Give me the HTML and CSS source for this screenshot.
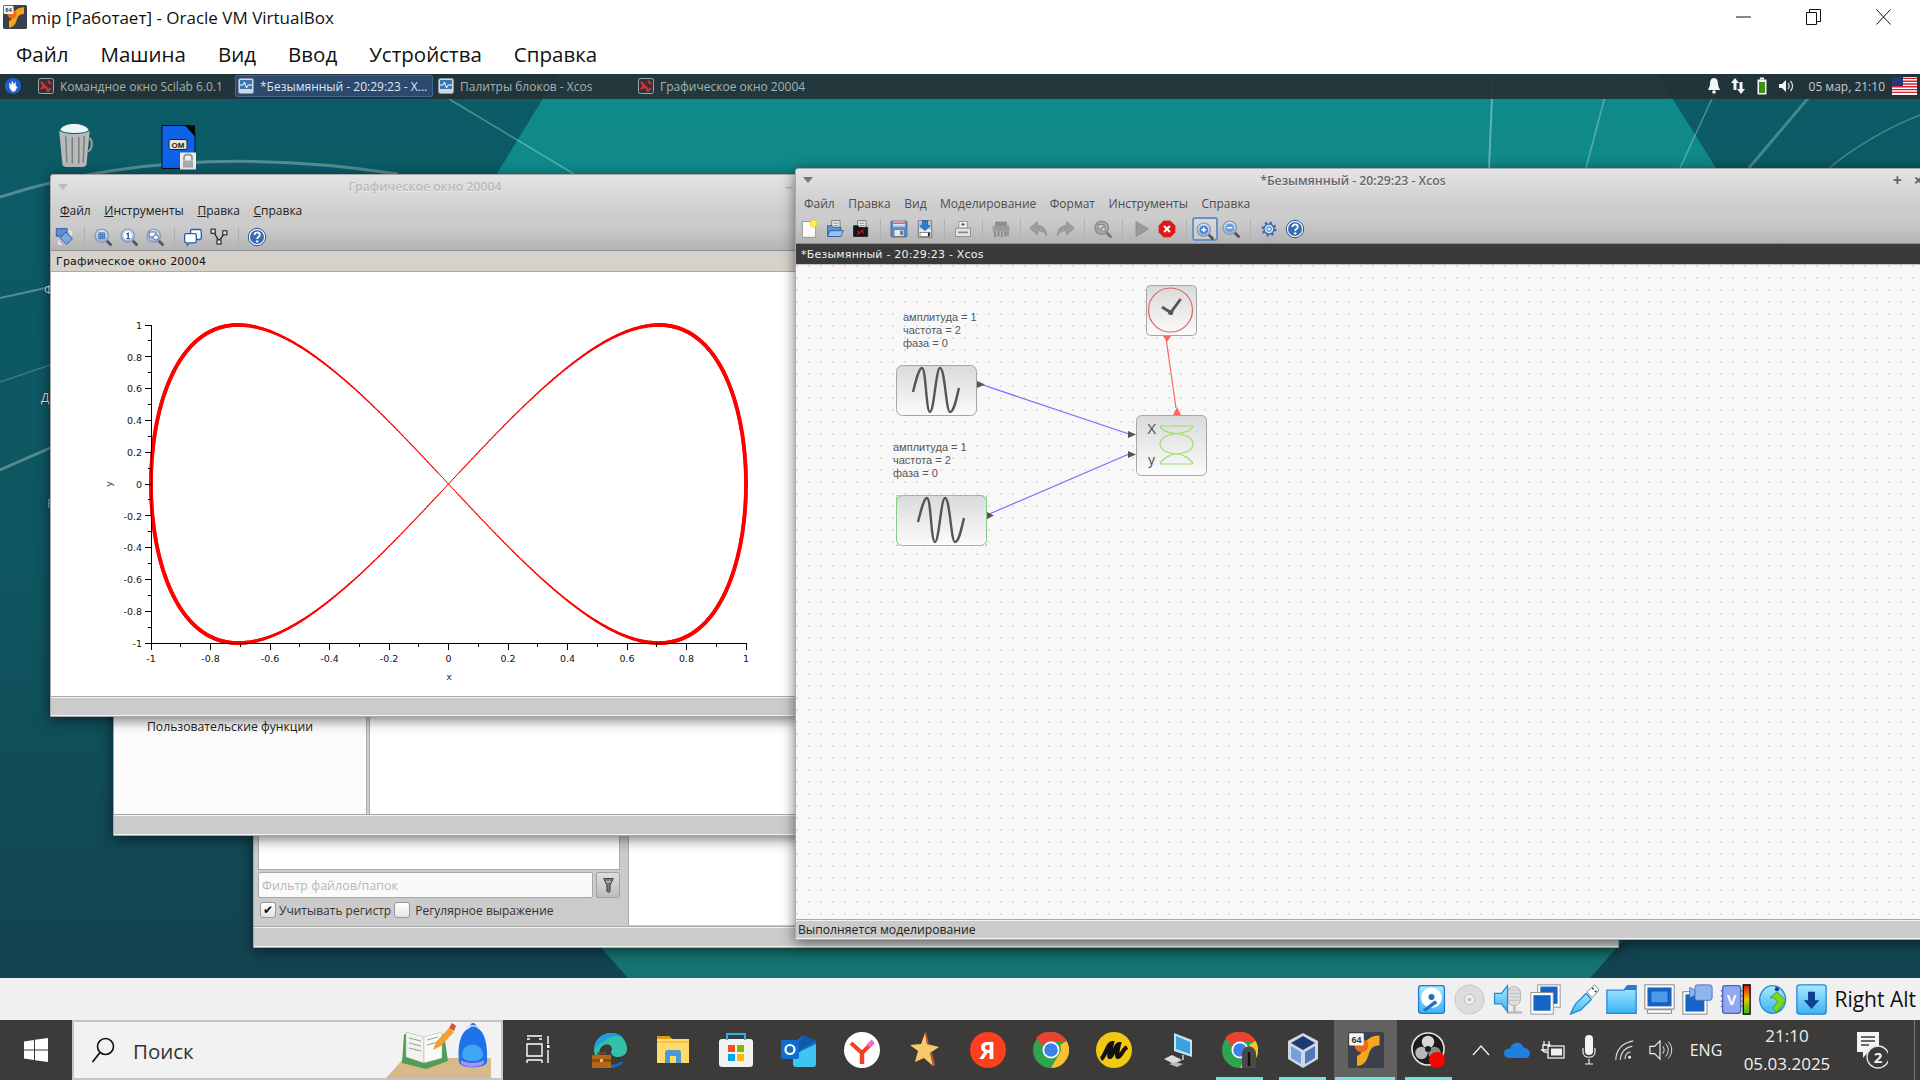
FILE: index.html
```html
<!DOCTYPE html>
<html lang="ru">
<head>
<meta charset="utf-8">
<title>mip [Работает] - Oracle VM VirtualBox</title>
<link rel="stylesheet" href="styles.css">
</head>
<body>
<svg class="sprite" width="0" height="0" aria-hidden="true">
  <defs>
    <linearGradient id="g-block" x1="0" y1="0" x2="0" y2="1"><stop offset="0" stop-color="#dadada"/><stop offset="1" stop-color="#fbfbfb"/></linearGradient>
    <linearGradient id="g-sky" x1="0" y1="0" x2="0" y2="1"><stop offset="0" stop-color="#a9e9ff"/><stop offset="1" stop-color="#3bb4f2"/></linearGradient>
    <linearGradient id="g-meter" x1="0" y1="0" x2="0" y2="1"><stop offset="0" stop-color="#e01010"/><stop offset=".5" stop-color="#f0c000"/><stop offset="1" stop-color="#20c020"/></linearGradient>
    <linearGradient id="g-lens" x1="0" y1="0" x2="0" y2="1"><stop offset="0" stop-color="#dfe9f5"/><stop offset="1" stop-color="#8fb0d6"/></linearGradient>
    <symbol id="i-lens" viewBox="0 0 24 24"><path d="M15 15l6 6" stroke="#555" stroke-width="3.4" stroke-linecap="round"/><circle cx="10.5" cy="10.5" r="8" fill="url(#g-lens)" stroke="#8a9db5" stroke-width="1.6"/></symbol>
    <symbol id="i-grid" viewBox="0 0 24 24"><use href="#i-lens"/><path d="M7 7h7v7H7zM7 9.3h7M7 11.7h7M9.3 7v7M11.7 7v7" fill="none" stroke="#2f5ea8" stroke-width=".9"/></symbol>
    <symbol id="i-one" viewBox="0 0 24 24"><use href="#i-lens"/><circle cx="10.5" cy="10.5" r="5" fill="#fff"/><path d="M9 8.6l2-1.2v6.4M9 14h4" fill="none" stroke="#23518f" stroke-width="1.5"/></symbol>
    <symbol id="i-wins" viewBox="0 0 24 24"><use href="#i-lens"/><rect x="5" y="6" width="8" height="6" fill="#f2f6fb" stroke="#2f5ea8"/><circle cx="13" cy="12.5" r="3" fill="#fff" stroke="#2f5ea8"/></symbol>
    <symbol id="i-plus" viewBox="0 0 24 24"><use href="#i-lens"/><circle cx="10.5" cy="10.5" r="5.2" fill="#3f7fd0"/><path d="M10.5 7.4v6.2M7.4 10.5h6.2" stroke="#fff" stroke-width="2"/></symbol>
    <symbol id="i-minus" viewBox="0 0 24 24"><use href="#i-lens"/><circle cx="10.5" cy="10.5" r="5.2" fill="#6f9ad0"/><path d="M7.4 10.5h6.2" stroke="#fff" stroke-width="2"/></symbol>
    <symbol id="i-gzoom" viewBox="0 0 24 24"><path d="M15 15l6 6" stroke="#777" stroke-width="3.4" stroke-linecap="round"/><circle cx="10.5" cy="10.5" r="8" fill="#a9a9a9" stroke="#8c8c8c" stroke-width="1.6"/><rect x="6" y="6.5" width="7" height="5.5" fill="#c8c8c8" stroke="#808080"/><circle cx="12.5" cy="12.5" r="2.6" fill="#c8c8c8" stroke="#808080"/></symbol>
    <symbol id="i-help" viewBox="0 0 24 24"><circle cx="12" cy="12" r="10.4" fill="#fff" stroke="#24508f" stroke-width="1.2"/><circle cx="12" cy="12" r="8.4" fill="#3b6db0"/><path d="M9 9.5c0-4 6.4-4 6.4-.2 0 2.6-3.2 2.4-3.2 5" fill="none" stroke="#fff" stroke-width="2.1"/><circle cx="12.2" cy="17.2" r="1.4" fill="#fff"/></symbol>
    <symbol id="i-fig" viewBox="0 0 24 24"><rect x="1.5" y="2" width="13" height="9" fill="#5d8fd0" stroke="#24508f"/><path d="M6 13l7-7 8 8-7 7z" fill="#7fa8dc" stroke="#24508f"/><path d="M16 5l4 1-1 4M8 21l-4-1 1-4" fill="none" stroke="#eef" stroke-width="1.6"/></symbol>
    <symbol id="i-copy" viewBox="0 0 24 24"><rect x="9" y="3" width="13" height="12" rx="2" fill="#f5f8fc" stroke="#2f5ea8" stroke-width="1.6"/><rect x="2" y="8" width="14" height="11" rx="2" fill="#fff" stroke="#2f5ea8" stroke-width="1.6"/><path d="M5 19v3l3-3" fill="#fff" stroke="#2f5ea8" stroke-width="1.4"/></symbol>
    <symbol id="i-tree" viewBox="0 0 24 24"><path d="M5 5l7 12 7-10" fill="none" stroke="#222" stroke-width="1.4"/><rect x="2.5" y="2.5" width="5" height="5" fill="#ddd" stroke="#222" stroke-width="1.3"/><rect x="16.500" y="4.500" width="5" height="5" fill="#ddd" stroke="#222" stroke-width="1.3"/><rect x="9.500" y="15.500" width="5" height="5" fill="#ddd" stroke="#222" stroke-width="1.3"/></symbol>
    <symbol id="i-new" viewBox="0 0 24 24"><path d="M4 3h12l4 4v15H4z" fill="#fbfbfb" stroke="#8a8a8a"/><circle cx="17.500" cy="5.500" r="4.400" fill="#ffee55" stroke="#e0c020" stroke-width=".6"/></symbol>
    <symbol id="i-open" viewBox="0 0 24 24"><path d="M8 2h10v9H8z" fill="#eee" stroke="#666"/><path d="M10 5h6M10 8h6" stroke="#777"/><path d="M3 8h5l2 2h9v11H3z" fill="#5b95d8" stroke="#2a5a9f"/><path d="M3 21l3-7h16l-3 7z" fill="#9cc1ea" stroke="#2a5a9f"/></symbol>
    <symbol id="i-recent" viewBox="0 0 24 24"><path d="M8 2h10v9H8z" fill="#eee" stroke="#666"/><path d="M10 5h6M10 8h6" stroke="#777"/><path d="M3 8h5l2 2h10v11H3z" fill="#14141c" stroke="#222"/><path d="M8 14l2 3 3-3 2 3M7 18h2M14 13h2" stroke="#e01010" stroke-width="1.5" fill="none"/></symbol>
    <symbol id="i-save" viewBox="0 0 24 24"><rect x="2.500" y="2.500" width="19" height="19" rx="1" fill="#5b95d8" stroke="#2a5a9f"/><rect x="5" y="3" width="14" height="6" fill="#f0f0f0"/><path d="M5 5h14" stroke="#e03030" stroke-width="1.600"/><path d="M5 7.500h14" stroke="#bbb"/><rect x="6" y="12.500" width="12" height="8.500" fill="#e8e8e8" stroke="#555" stroke-width=".7"/><rect x="13.500" y="14" width="3" height="5" fill="#666"/></symbol>
    <symbol id="i-saveas" viewBox="0 0 24 24"><path d="M4 2h16v20H4z" fill="#eaeaea" stroke="#666"/><path d="M5 3h14v9H5z" fill="#9cc1ea"/><path d="M9 2h6v6h3l-6 6-6-6h3z" fill="#2f7fd0" stroke="#1c4d8f" stroke-width=".8"/><rect x="6" y="16" width="12" height="5" fill="#fff" stroke="#444" stroke-width=".7"/><rect x="15.500" y="16.500" width="2" height="4" fill="#111"/></symbol>
    <symbol id="i-print" viewBox="0 0 24 24"><path d="M7 3h10v8H7z" fill="#f6f6f6" stroke="#888"/><path d="M9.500 6.500l2.500-2 2.500 2-2.500 2z" fill="#666"/><path d="M3 11h18v10H3z" fill="#e4e4e4" stroke="#888"/><path d="M6 15h12v2H6z" fill="#888"/></symbol>
    <symbol id="i-gprint" viewBox="0 0 24 24"><path d="M5 3h14v7H5z" fill="#8d8d8d"/><path d="M2 8h20v7H2z" fill="#9b9b9b"/><path d="M5 15v7M9 15v6M13 15v7M17 15v6M20 15v5" stroke="#8a8a8a" stroke-width="2.400"/></symbol>
    <symbol id="i-undo" viewBox="0 0 24 24"><path d="M10 3v5c6 0 11 3 11 12-3-5-6-6-11-6v5L1 11z" fill="#9e9e9e" stroke="#8c8c8c"/></symbol>
    <symbol id="i-redo" viewBox="0 0 24 24"><path d="M14 3v5C8 8 3 11 3 20c3-5 6-6 11-6v5l9-8z" fill="#9e9e9e" stroke="#8c8c8c"/></symbol>
    <symbol id="i-play" viewBox="0 0 24 24"><path d="M6 3l15 9-15 9z" fill="#9b9b9b" stroke="#8a8a8a"/></symbol>
    <symbol id="i-stop" viewBox="0 0 24 24"><path d="M8 1.500h8L22.500 8v8L16 22.500H8L1.500 16V8z" fill="#e01818" stroke="#b4b4b4"/><path d="M8.500 8.500l7 7M15.500 8.500l-7 7" stroke="#fff" stroke-width="2.600"/></symbol>
    <symbol id="i-gear" viewBox="0 0 24 24"><circle cx="12" cy="12" r="6" fill="#dbe8f8" stroke="#3b6db0" stroke-width="1.800"/><circle cx="12" cy="12" r="7.500" fill="none" stroke="#3b6db0" stroke-width="3" stroke-dasharray="2.600 3.290"/><circle cx="12" cy="12" r="2.800" fill="#dbe8f8" stroke="#3b6db0" stroke-width="1.200"/></symbol>
    <symbol id="i-scilab" viewBox="0 0 16 16"><rect x=".5" y=".5" width="15" height="15" rx="2" fill="#30343a" stroke="#9aa"/><path d="M3 4l3 3-2 3 4-1 2 4 3-3M10 3l3 3" fill="none" stroke="#d83030" stroke-width="2"/></symbol>
    <symbol id="i-xcos" viewBox="0 0 16 16"><rect x=".5" y=".5" width="15" height="15" rx="2" fill="#cfd8e0" stroke="#8a9aa8"/><rect x="2" y="2" width="12" height="9" fill="#3f75ae"/><path d="M2 7h3l1.500-3 2 6 1.500-3h4" fill="none" stroke="#fff"/></symbol>
    <symbol id="i-vb64" viewBox="0 0 32 32"><rect width="32" height="32" rx="2" fill="#3b404b"/><path d="M8 30c5 0 8-3 10-9 1.500-5 3-9 10-9V3c-9 0-13 5-15 11-1 4-2 7-5 7z" fill="#f7a51e"/><circle cx="12" cy="12" r="6" fill="#ef6a14"/><rect x="1" y="1" width="13" height="11" rx="1" fill="#f4f4f4"/><text x="7.500" y="9.500" class="badge-text">64</text></symbol>
  </defs>
</svg>

<header class="host-title">
  <svg class="host-icon"><use href="#i-vb64"/></svg>
  <span class="host-title-text">mip [Работает] - Oracle VM VirtualBox</span>
  <div class="win-controls">
    <svg class="ctl" viewBox="0 0 15 16"><path d="M0 8h15" stroke="#111" fill="none"/></svg>
    <svg class="ctl" viewBox="0 0 15 16"><path d="M.5 3.500h10v12H.5zM3.500 3.500v-3h11v12h-4" stroke="#111" fill="none"/></svg>
    <svg class="ctl" viewBox="0 0 15 16"><path d="M.5.500l14 15M14.500.500l-14 15" stroke="#111" fill="none"/></svg>
  </div>
</header>
<nav class="host-menu">
  <span>Файл</span><span>Машина</span><span>Вид</span><span>Ввод</span><span>Устройства</span><span>Справка</span>
</nav>

<main class="guest">
  <svg class="wallpaper" viewBox="0 74 1920 904" preserveAspectRatio="none">
    <defs>
      <linearGradient id="g-wall" x1="0" y1="0" x2="0" y2="1"><stop offset="0" stop-color="#0b5c67"/><stop offset=".55" stop-color="#0e5660"/><stop offset="1" stop-color="#134350"/></linearGradient>
      <linearGradient id="g-wall2" x1="0" y1="0" x2="0" y2="1"><stop offset="0" stop-color="#0f8b8c"/><stop offset="1" stop-color="#167470"/></linearGradient>
    </defs>
    <rect x="0" y="74" width="1920" height="904" fill="url(#g-wall)"/>
    <path d="M558 74L259 562 628 978H1590L1962 560 1657 74z" fill="url(#g-wall2)"/>
    <g fill="none" stroke="#fff">
      <path d="M0 197Q178 140 398 174" stroke-opacity=".3" stroke-width="3"/>
      <path d="M449 99L574 174" stroke-opacity=".3" stroke-width="1.500"/>
      <path d="M1493 74L1489 168" stroke-opacity=".35" stroke-width="2"/>
      <path d="M1611 74L1586 168" stroke-opacity=".3" stroke-width="1.500"/>
      <path d="M1716 90L1680 168" stroke-opacity=".3" stroke-width="1.500"/>
      <path d="M1815 90L1749 168" stroke-opacity=".25" stroke-width="3"/>
      <path d="M1920 115Q1870 135 1829 168" stroke-opacity=".25" stroke-width="1.500"/>
      <path d="M0 298L50 287" stroke-opacity=".3" stroke-width="2"/>
      <path d="M0 382L50 365" stroke-opacity=".2" stroke-width="1.500"/>
      <path d="M0 470L50 448" stroke-opacity=".3" stroke-width="3"/>
    </g>
  </svg>

  <div class="panel">
    <svg class="panel-logo" viewBox="0 0 20 20"><circle cx="10" cy="10" r="9" fill="#1c5fd0"/><path d="M6 6l2 3 1-5 2 4 2-3 0 5 2 1-3 5H9L6 12z" fill="#fff"/></svg>
    <div class="task"><svg class="task-icon"><use href="#i-scilab"/></svg><span>Командное окно Scilab 6.0.1</span></div>
    <div class="task task-active"><svg class="task-icon"><use href="#i-xcos"/></svg><span>*Безымянный - 20:29:23 - Х...</span></div>
    <div class="task"><svg class="task-icon"><use href="#i-xcos"/></svg><span>Палитры блоков - Xcos</span></div>
    <div class="task"><svg class="task-icon"><use href="#i-scilab"/></svg><span>Графическое окно 20004</span></div>
    <div class="tray">
      <svg class="tray-icon" viewBox="0 0 16 18"><path d="M8 1c-3 0-4 3-4 6 0 3-2 5-2 6h12c0-1-2-3-2-6 0-3-1-6-4-6z" fill="#f4f4f4"/><circle cx="8" cy="15" r="1.800" fill="#f4f4f4"/></svg>
      <svg class="tray-icon" viewBox="0 0 16 18"><path d="M5 1l4 5H6.500v7h-3V6H1zM11 17l-4-5h2.500V5h3v7H15z" fill="#f4f4f4"/></svg>
      <svg class="tray-icon" viewBox="0 0 16 18"><rect x="3.500" y="2.500" width="9" height="15" fill="#f4f4f4"/><rect x="5" y="5" width="6" height="11" fill="#3f8f10"/><rect x="6" y=".5" width="4" height="2" fill="#f4f4f4"/></svg>
      <svg class="tray-icon" viewBox="0 0 16 18"><path d="M1 7h3l4-4v12l-4-4H1z" fill="#f4f4f4"/><path d="M10 6c1.500 2 1.500 4 0 6M12.500 4c2.500 3 2.500 7 0 10" stroke="#dfe6e6" fill="none" stroke-width="1.200"/></svg>
      <span class="tray-clock">05 мар, 21:10</span>
      <svg class="flag" viewBox="0 0 25 18"><rect width="25" height="18" fill="#fff"/><path d="M0 1.400h25M0 4.200h25M0 7h25M0 9.800h25M0 12.600h25M0 15.400h25" stroke="#d02030" stroke-width="1.400"/><rect width="11" height="9" fill="#26387c"/></svg>
    </div>
  </div>

  <svg class="desk-icon desk-trash" viewBox="2 2 33 40"><path d="M5 8c3-7 22-7 26 0-2 4-23 4-26 0z" fill="#eef4f6"/><path d="M4 9l3 31c1 4 21 4 22 0l3-31c-6 4-22 4-28 0z" fill="#b6babb"/><path d="M10 14l1 24M16 15v24M22 15v24M27 14l-1 24" stroke="#7d8283" stroke-width="1.500"/><path d="M31 16c4 0 4 10-1 12" fill="none" stroke="#999" stroke-width="2"/></svg>
  <svg class="desk-icon desk-doc" viewBox="0 0 36 46"><path d="M1 1h28l5 8v35H1z" fill="#0d62e8" stroke="#0a0f20"/><path d="M24 1h10v11z" fill="#050505"/><rect x="8" y="15" width="18" height="10" rx="2" fill="#e8e4d0" stroke="#222"/><text x="17" y="23" class="om-text">ОМ</text><rect x="19" y="28" width="16" height="17" fill="#eee"/><path d="M23 36v-3c0-4 8-4 8 0v3" fill="none" stroke="#999" stroke-width="1.800"/><rect x="22" y="36" width="10" height="7" fill="#aaa"/></svg>
  <span class="desk-label desk-label-1">Ф</span>
  <span class="desk-label desk-label-2">Д</span>
  <span class="desk-label desk-label-3">Р</span>

  <section class="window win-files">
    <div class="files-body">
      <div class="files-side">
        <div class="files-list"></div>
        <div class="filter-row">
          <div class="filter-input">Фильтр файлов/папок</div>
          <div class="filter-btn"><svg viewBox="0 0 16 22" class="filter-svg"><path d="M2 3h12l-4 8v8l-2 1-2-1v-8z" fill="#777" stroke="#333"/><path d="M5 7h6" stroke="#fff"/></svg></div>
        </div>
        <div class="check-row">
          <span class="check is-checked">✔</span><span class="check-label">Учитывать регистр</span>
          <span class="check"></span><span class="check-label check-label-2">Регулярное выражение</span>
        </div>
      </div>
      <div class="files-pane"></div>
    </div>
    <div class="win-status"></div>
  </section>

  <section class="window win-palette">
    <div class="palette-body">
      <div class="palette-list">Пользовательские функции</div>
      <div class="palette-pane"></div>
    </div>
    <div class="win-status"></div>
  </section>

  <section class="window win-graph">
    <div class="chrome chrome-graph">
      <header class="win-title win-title-inactive"><span class="win-arrow"></span><span class="win-name">Графическое окно 20004</span><span class="win-btns">–</span></header>
      <nav class="win-menu win-menu-graph"><span><u>Ф</u>айл</span><span><u>И</u>нструменты</span><span><u>П</u>равка</span><span><u>С</u>правка</span></nav>
      <div class="toolbar">
        <svg class="ti"><use href="#i-fig"/></svg><i class="sep"></i>
        <svg class="ti"><use href="#i-grid"/></svg><svg class="ti"><use href="#i-one"/></svg><svg class="ti"><use href="#i-wins"/></svg><i class="sep"></i>
        <svg class="ti"><use href="#i-copy"/></svg><svg class="ti"><use href="#i-tree"/></svg><i class="sep"></i>
        <svg class="ti"><use href="#i-help"/></svg>
      </div>
    </div>
    <div class="doc-bar">Графическое окно 20004</div>
    <div class="plot-canvas">
      <svg class="plot" width="749" height="423" viewBox="51 272 749 423">
        <g id="curve" fill="none" stroke="#ff0000" stroke-linecap="round"></g>
        <path class="axes" d="M151 325V643H746
          M151 643v7M210.500 643v7M270 643v7M329.500 643v7M389 643v7M448.500 643v7M508 643v7M567.500 643v7M627 643v7M686.500 643v7M746 643v7
          M180.750 643v4M240.250 643v4M299.750 643v4M359.250 643v4M418.750 643v4M478.250 643v4M537.750 643v4M597.250 643v4M656.750 643v4M716.250 643v4
          M151 325h-6M151 356.800h-6M151 388.600h-6M151 420.400h-6M151 452.200h-6M151 484h-6M151 515.800h-6M151 547.600h-6M151 579.400h-6M151 611.200h-6M151 643h-6
          M151 340.900h-3M151 372.700h-3M151 404.500h-3M151 436.300h-3M151 468.100h-3M151 499.900h-3M151 531.700h-3M151 563.500h-3M151 595.300h-3M151 627.100h-3"/>
        <g class="ylabels">
          <text x="142" y="329">1</text><text x="142" y="360.500">0.8</text><text x="142" y="392.300">0.6</text><text x="142" y="424">0.4</text><text x="142" y="456">0.2</text><text x="142" y="487.700">0</text><text x="142" y="519.500">-0.2</text><text x="142" y="551.300">-0.4</text><text x="142" y="583">-0.6</text><text x="142" y="615">-0.8</text><text x="142" y="646.700">-1</text>
        </g>
        <g class="xlabels">
          <text x="151" y="662">-1</text><text x="210.500" y="662">-0.8</text><text x="270" y="662">-0.6</text><text x="329.500" y="662">-0.4</text><text x="389" y="662">-0.2</text><text x="448.500" y="662">0</text><text x="508" y="662">0.2</text><text x="567.500" y="662">0.4</text><text x="627" y="662">0.6</text><text x="686.500" y="662">0.8</text><text x="746" y="662">1</text>
        </g>
        <text class="axis-name" x="449" y="680">x</text>
        <text class="axis-name" transform="translate(112 484) rotate(-90)">y</text>
      </svg>
    </div>
    <div class="win-status"></div>
  </section>

  <section class="window win-xcos">
    <div class="chrome chrome-xcos">
      <header class="win-title"><span class="win-arrow"></span><span class="win-name">*Безымянный - 20:29:23 - Xcos</span><span class="win-btns win-btns-xcos"><b>+</b><b>×</b></span></header>
      <nav class="win-menu"><span>Файл</span><span>Правка</span><span>Вид</span><span>Моделирование</span><span>Формат</span><span>Инструменты</span><span>Справка</span></nav>
      <div class="toolbar">
        <svg class="ti"><use href="#i-new"/></svg><svg class="ti"><use href="#i-open"/></svg><svg class="ti"><use href="#i-recent"/></svg><i class="sep"></i>
        <svg class="ti"><use href="#i-save"/></svg><svg class="ti"><use href="#i-saveas"/></svg><i class="sep"></i>
        <svg class="ti"><use href="#i-print"/></svg><i class="sep"></i>
        <svg class="ti"><use href="#i-gprint"/></svg><i class="sep"></i>
        <svg class="ti"><use href="#i-undo"/></svg><svg class="ti"><use href="#i-redo"/></svg><i class="sep"></i>
        <svg class="ti"><use href="#i-gzoom"/></svg><i class="sep"></i>
        <svg class="ti"><use href="#i-play"/></svg><svg class="ti"><use href="#i-stop"/></svg><i class="sep"></i>
        <span class="ti-pressed"><svg class="ti"><use href="#i-plus"/></svg></span><svg class="ti"><use href="#i-minus"/></svg><i class="sep"></i>
        <svg class="ti"><use href="#i-gear"/></svg><svg class="ti"><use href="#i-help"/></svg>
      </div>
    </div>
    <div class="doc-bar doc-bar-dark">*Безымянный - 20:29:23 - Xcos</div>
    <div class="xcos-canvas">
      <svg class="diagram" width="1130" height="654" viewBox="796 265 1130 654">
        <path d="M977 383L1129 434M987 515L1129 454" stroke="#7070ff" stroke-width="1.200" fill="none"/>
        <path d="M1166 338L1176 408" stroke="#ff6464" stroke-width="1.200" fill="none"/>

        <rect class="block" x="1146.500" y="285.500" width="50" height="50" rx="4"/>
        <circle cx="1170.500" cy="310" r="22" fill="none" stroke="#e06464" stroke-width="1.200"/>
        <path d="M1162 307L1170.700 312.500 1180.700 299" fill="none" stroke="#555" stroke-width="2.800"/>
        <circle cx="1170.700" cy="312.500" r="2.600" fill="#555"/>

        <rect class="block" x="896.500" y="365.500" width="80" height="50" rx="6"/>
        <path class="wave" d="M913 392C916 380 919 368 922 368C926 368 926 412 930 412C934 412 936 368 940 368C945 368 946 412 950 412C954 412 956 400 959 388"/>

        <rect class="block" x="896.500" y="495.500" width="90" height="50" rx="6"/>
        <rect x="896.500" y="495.500" width="90" height="50" fill="none" stroke="#66ee66" stroke-dasharray="3 3"/>
        <path class="wave" d="M918 522C921 510 924 498 927 498C931 498 931 542 935 542C939 542 941 498 945 498C950 498 951 542 955 542C959 542 961 530 964 518"/>

        <rect class="block" x="1136.500" y="415.500" width="70" height="60" rx="5"/>
        <text class="scope-label" x="1147" y="434">X</text>
        <text class="scope-label" x="1148" y="465">y</text>
        <path d="M1160 426h33M1160 426C1162 431 1170 433.500 1176.500 433.500C1183 433.500 1191 431 1193 426M1176.500 433.500C1186 435 1193 438 1193 444C1193 450 1186 453 1176.500 454C1167 453 1160 450 1160 444C1160 438 1167 435 1176.500 433.500M1160 464C1162 459 1170 454 1176.500 454C1183 454 1191 459 1193 464M1160 464h33" fill="none" stroke="#9fdc6e" stroke-width="1.200"/>

        <path class="port" d="M977 381l8 3.500-8 3.500zM987 512l7 3.500-7 3.500zM1128 431l8 3.500-8 3.500zM1128 451l8 3.500-8 3.500z"/>
        <path class="port-red" d="M1163 336h8l-4 6zM1173 415h8l-4-8z"/>

        <g class="dia-note">
          <text x="903" y="321">амплитуда = 1</text><text x="903" y="334">частота = 2</text><text x="903" y="347">фаза = 0</text>
          <text x="893" y="451">амплитуда = 1</text><text x="893" y="464">частота = 2</text><text x="893" y="477">фаза = 0</text>
        </g>
      </svg>
    </div>
    <div class="win-status win-status-text"><span>Выполняется моделирование</span></div>
  </section>
</main>

<div class="vm-status">
  <svg class="vi" viewBox="0 0 32 36"><rect x="1" y="2" width="30" height="32" rx="3" fill="url(#g-sky)" stroke="#1f78d8" stroke-width="1.500"/><circle cx="16" cy="16" r="12" fill="#fff"/><circle cx="16" cy="15" r="3.500" fill="#1f6fc8"/><path d="M6 30l14-11 3 3-14 10z" fill="#1f6fc8"/></svg>
  <svg class="vi" viewBox="0 0 36 36"><circle cx="18" cy="18" r="17" fill="#dcdcdc" stroke="#c4c4c4"/><circle cx="18" cy="18" r="6" fill="#eee" stroke="#b8b8b8"/><circle cx="18" cy="18" r="2" fill="#bbb"/></svg>
  <svg class="vi" viewBox="0 0 36 36"><rect x="18" y="3" width="15" height="22" rx="7" fill="#dedede" stroke="#aaa"/><path d="M19 7h13M19 11h13M19 15h13M19 19h13" stroke="#bbb"/><path d="M26 25v7M17 33h18" stroke="#bbb" stroke-width="3"/><path d="M3 11h8l7-9v30l-7-9H3z" fill="url(#g-sky)" stroke="#2a86d8" stroke-width="1.500"/></svg>
  <svg class="vi" viewBox="0 0 36 36"><rect x="9" y="1" width="26" height="26" fill="#fff" stroke="#888"/><rect x="12" y="3" width="20" height="20" fill="#1664c8"/><rect x="1" y="10" width="26" height="25" fill="#fff" stroke="#888"/><rect x="4" y="13" width="20" height="18" fill="#1664c8"/></svg>
  <svg class="vi" viewBox="0 0 36 36"><path d="M21 11l6 7-12 12-5 2-7 3 3-7 3-5z" fill="url(#g-sky)" stroke="#2a86d8" stroke-width="1.500"/><path d="M22 9l9-8 5 6-8 9z" fill="#fff" stroke="#777"/><path d="M28 5l2 1M31 8l2 1" stroke="#333" stroke-width="1.800"/></svg>
  <svg class="vi" viewBox="0 0 36 36"><path d="M1 7h20l4-5h10v32H1z" fill="url(#g-sky)" stroke="#2a86d8" stroke-width="1.500"/><path d="M21 7l4-5h10v5z" fill="#3278c8"/></svg>
  <svg class="vi" viewBox="0 0 36 36"><rect x="1" y="1" width="34" height="28" fill="#fff" stroke="#777"/><rect x="4" y="4" width="28" height="22" fill="#1664c8"/><rect x="8" y="8" width="20" height="14" fill="#4a9ae8" stroke="#0f4ea0"/><path d="M4 30h28v4H4z" fill="#fff" stroke="#777"/></svg>
  <svg class="vi" viewBox="0 0 36 36"><rect x="1" y="9" width="28" height="26" fill="#fff" stroke="#777"/><rect x="4" y="12" width="22" height="20" fill="#1664c8"/><rect x="15" y="1" width="20" height="18" rx="3" fill="#8fb4ee" stroke="#4a6fc0"/><path d="M15 7l-6-3v12l6-3z" fill="#8fb4ee" stroke="#4a6fc0"/></svg>
  <svg class="vi" viewBox="0 0 36 36"><rect x="3" y="2" width="21" height="32" rx="3" fill="#90a8f0" stroke="#4a5fc0" stroke-width="1.500"/><path d="M1 8h2M1 14h2M1 20h2M1 26h2M24 8h2M24 14h2M24 20h2M24 26h2" stroke="#4a5fc0" stroke-width="1.500"/><text x="13.500" y="24" class="v-text">V</text><rect x="27" y="1" width="8" height="34" fill="url(#g-meter)" stroke="#000" stroke-width="1.500"/></svg>
  <svg class="vi" viewBox="0 0 36 36"><ellipse cx="17" cy="18" rx="15" ry="16" fill="url(#g-sky)" stroke="#2a86d8" stroke-width="1.500"/><circle cx="22" cy="6" r="2.500" fill="#0f3f90"/><path d="M14 16l8-7 10 10-10 14-5-5 6-8-5-4z" fill="#7cd81c" stroke="#3f9a10"/></svg>
  <svg class="vi" viewBox="0 0 36 36"><rect x="1" y="1" width="34" height="34" rx="3" fill="url(#g-sky)" stroke="#2a86d8" stroke-width="1.500"/><path d="M14 9h8v10h5l-9 10-9-10h5z" fill="#0f3f90"/></svg>
  <span class="right-alt">Right Alt</span>
</div>

<footer class="taskbar">
  <div class="start"><svg class="start-logo" viewBox="0 0 24 24"><path d="M0 3.500l10-1.500v9.500H0zM11 1.800L24 0v11.500H11zM0 12.500h10V22L0 20.500zM11 12.500h13V24l-13-1.800z" fill="#fff"/></svg></div>
  <div class="search">
    <svg class="search-icon" viewBox="0 0 24 26"><circle cx="14.500" cy="9.500" r="8" fill="none" stroke="#111" stroke-width="1.600"/><path d="M9 15.500L1.500 25" stroke="#111" stroke-width="1.800"/></svg>
    <span class="search-text">Поиск</span>
    <svg class="search-art" viewBox="0 0 115 58">
      <path d="M0 58L18 38H105v20z" fill="#d8b98c"/>
      <path d="M18 14l20 5 20-5 4 27-22 8-24-6z" fill="#4f9e55"/><path d="M20 12l18 5v26l-18-6z" fill="#f2f2ee" stroke="#aaa" stroke-width=".5"/><path d="M38 17l18-5v26l-18 5z" fill="#fafaf6" stroke="#aaa" stroke-width=".5"/><path d="M23 18l12 3M23 23l12 3M23 28l12 3M41 20l11-3M41 25l11-3" stroke="#999"/>
      <path d="M47 30l3-8 13-14 5 4-13 14z" fill="#f4a030"/><path d="M63 8l3-5 4 3-2 5z" fill="#e04c2c"/>
      <path d="M73 42c-2-22 4-32 11-34 0-3 1-5 3-5s4 2 4 5c7 3 11 14 10 34-1 7-27 7-28 0z" fill="#1e73ea"/><path d="M81 8c2-3 10-3 12 0" fill="none" stroke="#cfe2ff" stroke-width="1.500"/><path d="M76 35c0-14 21-14 21 0 0 8-21 8-21 0z" fill="#3fa6f5"/><path d="M75 40c4 4 19 4 23 0v3c-4 5-19 5-23 0z" fill="#b88cf0"/>
    </svg>
  </div>
  <div class="apps">
    <div class="app app-taskview"><svg class="ai" viewBox="0 0 36 36"><path d="M5 4h15M5 7h3M17 7h3M5 12h15v12H5zM5 28v3M20 28v3M5 28h15M26 4v8M26 18v13" fill="none" stroke="#fff" stroke-width="1.400"/><rect x="25" y="13" width="2.500" height="3" fill="#fff"/></svg></div>
    <div class="app"><svg class="ai" viewBox="0 0 36 36"><path d="M2 18C2 8 10 1 19 1c9 0 16 7 16 16 0 5-4 8-9 8-4 0-7-2-7-5 0-1 1-2 1-3 0-4-5-6-8-4-6 3-6 11-2 16-5-1-8-6-8-11z" fill="#35c1a7"/><path d="M2 18C2 8 10 1 19 1c6 0 10 2 12 5-6-3-14-2-18 3-3 1-8 4-11 9z" fill="#1d9fe0"/><path d="M10 28c5 6 14 6 20 1l1 2c-5 5-15 7-23 3z" fill="#0f6cbe"/><rect x="0" y="23" width="19" height="13" rx="1" fill="#b2691d"/><rect x="0" y="27" width="19" height="3" fill="#8a4e12"/><path d="M6 23v-2h7v2" fill="none" stroke="#7a4a14" stroke-width="1.500"/><rect x="8" y="27" width="3" height="3" fill="#f0c040"/></svg></div>
    <div class="app"><svg class="ai" viewBox="0 0 36 36"><path d="M2 4h12l3 3h17v24H2z" fill="#ffd96a"/><path d="M2 4h12l3 3H2z" fill="#d8a012"/><path d="M2 10h32" stroke="#f6c64a" stroke-width="2"/><path d="M10 31V21c0-2 1-3 3-3h10c2 0 3 1 3 3v10h-5v-7h-6v7z" fill="#4a9ad8"/></svg></div>
    <div class="app"><svg class="ai" viewBox="0 0 36 36"><rect x="1" y="7" width="34" height="28" rx="3" fill="#f2f2f2"/><path d="M9 8V2h18v6" fill="none" stroke="#2fb0ea" stroke-width="2"/><rect x="10" y="13" width="7" height="7" fill="#f25022"/><rect x="19" y="13" width="7" height="7" fill="#7fba00"/><rect x="10" y="22" width="7" height="7" fill="#00a4ef"/><rect x="19" y="22" width="7" height="7" fill="#ffb900"/></svg></div>
    <div class="app"><svg class="ai" viewBox="0 0 36 36"><path d="M8 16L22 3l13 6v14z" fill="#1b6ec4"/><path d="M12 23l23-11v20c0 2-1 3-3 3H15c-2 0-3-1-3-3z" fill="#3dc6f2"/><path d="M22 3l13 6-23 13z" fill="#0f5aa6"/><rect x="0" y="8" width="18" height="19" rx="2" fill="#0f6cd0"/><circle cx="9" cy="17.500" r="4.500" fill="none" stroke="#fff" stroke-width="2.200"/></svg></div>
    <div class="app"><svg class="ai" viewBox="0 0 36 36"><circle cx="18" cy="18" r="18" fill="#fff"/><path d="M7 11l11 10 11-11" fill="none" stroke="#f04020" stroke-width="4"/><path d="M24 14l5-5" stroke="#f06ad0" stroke-width="4"/><path d="M18 20v12" stroke="#f04020" stroke-width="4.500"/></svg></div>
    <div class="app"><svg class="ai" viewBox="0 0 36 36"><path d="M18 1l2 11 12 3-9 6 3 13-9-8-9 4 3-11-8-6 11-1z" fill="#f8c96a"/><path d="M18 1l2 11 2 1-3-13zM23 21l3 13 2-1-3-12z" fill="#c85a28"/></svg></div>
    <div class="app"><span class="ya">Я</span></div>
    <div class="app"><svg class="ai" viewBox="0 0 36 36"><use href="#chrome-art"/></svg></div>
    <div class="app"><svg class="ai" viewBox="0 0 36 36"><circle cx="18" cy="18" r="18" fill="#f2c811"/><path d="M5 27c4-2 7-16 11-16-1 4-4 14-2 14 3 0 5-13 9-13-1 4-3 13-1 13 3 0 4-7 9-10" fill="none" stroke="#111" stroke-width="4.200"/></svg></div>
    <div class="app"><svg class="ai" viewBox="0 0 36 36"><path d="M15 1l18 7v17l-18-6z" fill="#bfe4f4"/><path d="M17 4l14 6v12l-14-5z" fill="#3aa0e0"/><path d="M24 23v5" stroke="#aaa" stroke-width="2"/><path d="M5 27l8-4 10 5-8 4z" fill="#ddd"/><path d="M10 32l6-2 8 2-6 3z" fill="#bbb"/></svg></div>
    <div class="app app-running"><svg class="ai" viewBox="0 0 36 36"><use href="#chrome-art"/><path d="M20 36V22c0-10 14-10 14 0v14z" fill="#4a4a4a"/><path d="M27 20v14" stroke="#111" stroke-width="2.500"/></svg></div>
    <div class="app app-running"><svg class="ai" viewBox="0 0 36 36"><path d="M18 1l15 8v18l-15 9-15-9V9z" fill="#d0d8e8"/><path d="M18 4l12 7-12 7-12-7z" fill="#1c3a74"/><path d="M6 14l10 6v12L6 26z" fill="#7aa0d8"/><path d="M30 14l-10 6v12l10-6z" fill="#5278b8"/></svg></div>
    <div class="app app-running app-active"><svg class="ai ai-vb"><use href="#i-vb64"/></svg></div>
    <div class="app app-running"><svg class="ai" viewBox="0 0 36 36"><circle cx="17" cy="17" r="16" fill="#1c1c1c" stroke="#e8e8e8" stroke-width="1.600"/><circle cx="17" cy="10" r="6.200" fill="#d8d8d8"/><circle cx="10.500" cy="21" r="6.200" fill="#b8b8b8"/><circle cx="23.500" cy="21" r="6.200" fill="#8a8a8a"/><circle cx="17" cy="17" r="3" fill="#1c1c1c"/><circle cx="26" cy="28" r="8" fill="#f00"/></svg></div>
  </div>
  <div class="tray-host">
    <div class="th"><svg class="thi" viewBox="0 0 20 20"><path d="M2 15l8-9 8 9" fill="none" stroke="#f0f0f0" stroke-width="1.300"/></svg></div>
    <div class="th"><svg class="thi thi-wide" viewBox="0 0 26 20"><path d="M6 18c-4 0-6-2-6-5 0-3 3-5 6-4 1-5 5-7 9-6 3 1 4 3 5 5 3 0 6 2 6 5s-2 5-5 5z" fill="#1e80e0"/></svg></div>
    <div class="th"><svg class="thi thi-wide" viewBox="0 0 26 22"><path d="M1 11h6M4 2v4M9 2v4M3 6h7v5c0 3-7 3-7 0z" fill="none" stroke="#f0f0f0" stroke-width="1.300"/><rect x="8" y="7" width="16" height="12" fill="#3d3b39" stroke="#f0f0f0" stroke-width="1.300"/><rect x="11" y="9.500" width="11" height="7" fill="#f0f0f0"/></svg></div>
    <div class="th"><svg class="thi thi-tall" viewBox="0 0 14 30"><rect x="3" y="0" width="8" height="20" rx="4" fill="#f4f4f4"/><path d="M1 13v4c0 7 12 7 12 0v-4M7 24v5M3 29h8" fill="none" stroke="#f0f0f0" stroke-width="1.200"/></svg></div>
    <div class="th"><svg class="thi thi-wide" viewBox="0 0 26 24"><circle cx="18" cy="20" r="1.600" fill="#f0f0f0"/><path d="M3 23C3 12 10 4 22 2M8 23C8 15 13 9 21 8M13 22c0-4 2-7 6-8" fill="none" stroke="#e0e0e0" stroke-width="1.200"/></svg></div>
    <div class="th th-sound"><svg class="thi thi-wide" viewBox="0 0 26 24"><path d="M2 8h5l6-6v20l-6-6H2z" fill="none" stroke="#f0f0f0" stroke-width="1.300"/><path d="M16 8c2 2.500 2 5.500 0 8M19 5c4 4 4 10 0 14M22 3c5 5 5 13 0 18" fill="none" stroke="#f0f0f0" stroke-width="1"/></svg></div>
    <span class="lang">ENG</span>
    <div class="clock"><span>21:10</span><span>05.03.2025</span></div>
    <div class="notif"><svg class="notif-icon" viewBox="0 0 32 38"><path d="M1 1h22v20H12l-5 6v-6H1z" fill="#f4f4f4"/><path d="M5 6h14M5 10h14M5 14h8" stroke="#3d3b39" stroke-width="1.300"/><circle cx="22" cy="26" r="11" fill="#3d3b39" stroke="#e8e8e8" stroke-width="1.300"/><text x="22" y="32" class="notif-num">2</text></svg></div>
    <i class="show-desktop"></i>
  </div>
</footer>

<svg class="sprite" width="0" height="0" aria-hidden="true">
  <defs>
    <symbol id="chrome-art" viewBox="0 0 36 36">
      <circle cx="18" cy="18" r="18" fill="#2fa44f"/>
      <path d="M18 0a18 18 0 0 1 15.600 9H18a9 9 0 0 0-8 5L3 6A18 18 0 0 1 18 0z" fill="#ea4335"/>
      <path d="M33.600 9A18 18 0 0 1 18 36l7.800-13.500A9 9 0 0 0 27 13z" fill="#fbc02d"/>
      <circle cx="18" cy="18" r="8.500" fill="#fff"/><circle cx="18" cy="18" r="6.800" fill="#3f7fe8"/>
    </symbol>
  </defs>
</svg>
<script src="script.js"></script>
</body>
</html>
```
FILE: styles.css
```css
* { box-sizing: border-box; }
html, body { margin: 0; padding: 0; }
body {
  width: 1920px; height: 1080px; overflow: hidden;
  display: flex; flex-direction: column;
  font-family: "Open Sans", "Noto Sans", sans-serif;
  background: #fff; color: #111;
}
.sprite { position: absolute; }
.badge-text { font: 700 8px "Liberation Sans", sans-serif; fill: #333; text-anchor: middle; }
.om-text { font: 700 8px "Liberation Sans", sans-serif; fill: #222; text-anchor: middle; }
.v-text { font: 700 17px "Liberation Sans", sans-serif; fill: #fff; text-anchor: middle; }

/* host window */
.host-title { height: 38px; flex: none; display: flex; align-items: center; padding: 0 0 4px 3px; background: #fff; }
.host-icon { width: 24px; height: 24px; }
.host-title-text { margin-left: 4px; font-size: 17px; color: #111; }
.win-controls { margin-left: auto; display: flex; gap: 55px; padding-right: 29px; }
.ctl { width: 15px; height: 16px; display: block; }
.host-menu { height: 36px; flex: none; display: flex; align-items: center; gap: 32px; padding: 0 0 4px 16px; font-size: 20.5px; color: #111; background: #fff; }

/* guest */
.guest { position: relative; flex: 1; min-height: 0; overflow: hidden; background: #0d5a64; }
.wallpaper { position: absolute; inset: 0; width: 100%; height: 100%; display: block; }
.panel { position: relative; height: 25px; display: flex; align-items: center; padding: 0 0 1px 4px; background: rgba(36, 50, 54, .93); color: #a3b3b3; font-size: 12px; }
.panel-logo { width: 18px; height: 18px; margin-right: 13px; flex: none; }
.task { width: 198px; height: 22px; margin-right: 2px; display: flex; align-items: center; padding-left: 2px; white-space: nowrap; overflow: hidden; flex: none; border: 1px solid transparent; }
.task-active { background: #2b4a6e; border-color: #41699a; border-radius: 2px; color: #dfe7ee; }
.task-icon { width: 16px; height: 16px; margin-right: 6px; flex: none; }
.tray { margin-left: auto; display: flex; align-items: center; padding-right: 3px; }
.tray-icon { width: 16px; height: 18px; margin-right: 8px; flex: none; }
.tray-clock { margin-left: 7px; margin-right: 7px; color: #c2cccc; }
.flag { width: 25px; height: 18px; }

.desk-icon { position: absolute; display: block; }
.desk-trash { left: 57px; top: 49px; width: 36px; height: 44px; }
.desk-doc { left: 161px; top: 50px; width: 36px; height: 47px; }
.desk-label { position: absolute; color: #e8e8e8; font-size: 12px; text-shadow: 0 0 2px #000; }
.desk-label-1 { left: 44px; top: 207px; }
.desk-label-2 { left: 41px; top: 315px; }
.desk-label-3 { left: 47px; top: 421px; opacity: .7; }

/* windows */
.window { position: absolute; display: flex; flex-direction: column; background: #cbcbcb; border: 1px solid #a8a8a8; box-shadow: 0 3px 14px rgba(0, 0, 0, .55); border-radius: 3px 3px 0 0; overflow: hidden; }
.win-files { left: 253px; top: 640px; width: 1366px; height: 234px; z-index: 1; }
.win-palette { left: 113px; top: 626px; width: 700px; height: 136px; z-index: 2; }
.win-graph { left: 50px; top: 100px; width: 750px; height: 543px; z-index: 3; }
.win-xcos { left: 795px; top: 94px; width: 1130px; height: 772px; z-index: 4; }

.chrome { flex: none; background: linear-gradient(#e4e4e4, #cdcdcd 38px, #cbcbcb 52px, #b4b4b4); border-bottom: 1px solid #8f8f8f; }
.win-title { height: 22px; display: grid; grid-template-columns: 1fr auto 1fr; align-items: center; padding: 0 5px; }
.chrome-xcos .win-title { padding-right: 19px; }
.chrome-xcos .win-menu { height: 24px; }
.chrome-graph .win-title { height: 23px; }
.chrome-graph .toolbar { height: 27px; }
.win-arrow { width: 0; height: 0; border-left: 5px solid transparent; border-right: 5px solid transparent; border-top: 6px solid #777; justify-self: start; margin-left: 2px; }
.win-title-inactive .win-arrow { border-top-color: #bbb; }
.win-name { font-size: 12.3px; font-weight: 600; color: #666; text-shadow: 0 1px 0 #f2f2f2; white-space: nowrap; }
.win-title-inactive .win-name { color: #b9b9b9; text-shadow: 0 1px 0 #eee; }
.win-btns { justify-self: end; color: #aaa; font-size: 14px; padding-right: 2px; }
.win-btns-xcos { display: flex; gap: 12px; padding-right: 0; margin-right: -18px; color: #666; }
.win-btns-xcos b { font-weight: 700; font-size: 16px; line-height: 16px; }
.win-menu { height: 25px; display: flex; align-items: center; gap: 13.500px; padding-left: 8px; font-size: 12px; color: #4d4d4d; }
.win-menu-graph { gap: 13.600px; padding-left: 9px; color: #222; }
.toolbar { height: 28px; display: flex; align-items: center; padding-left: 0; }
.win-graph .toolbar { padding-left: 1px; }
.ti { width: 26px; height: 20px; flex: none; display: block; }
.sep { width: 12px; height: 20px; flex: none; display: block; background: linear-gradient(#b0b0b0, #b0b0b0) center / 1px 100% no-repeat; }
.ti-pressed { display: block; width: 26px; height: 24px; flex: none; padding-top: 2px; border: 2px solid #6a92c0; border-radius: 3px; margin: 0; background: rgba(255, 255, 255, .25); }
.ti-pressed .ti { width: 22px; }

.doc-bar { flex: none; height: 21px; display: flex; align-items: center; padding-left: 5px; background: #d6d2cb; border-bottom: 1px solid #aaa; font: 11px "DejaVu Sans", sans-serif; color: #111; letter-spacing: .2px; white-space: nowrap; }
.doc-bar-dark { background: #3a3a3a; color: #f2f2f2; border-bottom: 1px solid #c8c8c8; }
.plot-canvas { flex: 1; min-height: 0; background: #fff; overflow: hidden; }
.plot { display: block; }
.axes { fill: none; stroke: #000; stroke-width: 1; shape-rendering: crispEdges; }
.ylabels text { font: 9.5px "DejaVu Sans", sans-serif; text-anchor: end; fill: #111; }
.xlabels text { font: 9.5px "DejaVu Sans", sans-serif; text-anchor: middle; fill: #111; }
.axis-name { font: 9.5px "DejaVu Sans", sans-serif; fill: #333; text-anchor: middle; }

.xcos-canvas { flex: 1; min-height: 0; overflow: hidden; background-color: #f8f8f8; background-image: radial-gradient(circle at 1px 1px, #d2d2d2 .6px, transparent .9px); background-size: 12px 12px; }
.diagram { display: block; }
.block { fill: url(#g-block); stroke: #a6a6a6; }
.wave { fill: none; stroke: #555; stroke-width: 2.4; }
.port { fill: #555; }
.port-red { fill: #ff6464; }
.scope-label { font: 14px "Liberation Sans", sans-serif; fill: #555; }
.dia-note text { font: 11px "Liberation Sans", sans-serif; fill: #555; }

.win-status { flex: none; height: 21px; background: #cbcbcb; border-top: 1px solid #a8a8a8; box-shadow: inset 0 1px 0 #f2f2f2, inset 0 -1px 0 #f2f2f2; }
.win-graph .win-status { height: 20px; }
.win-status-text { height: 20px; display: flex; align-items: center; padding-left: 2px; font-size: 12.2px; color: #222; white-space: nowrap; }

/* palette window */
.palette-body { flex: 1; min-height: 0; display: flex; background: #cfcfcf; gap: 4px; }
.palette-list { width: 252px; flex: none; padding: 17px 0 0 33px; background: #fcfcfc; font-size: 12.2px; color: #222; white-space: nowrap; box-shadow: 1px 0 0 #aaa; }
.palette-pane { flex: 1; background: #fff; box-shadow: -1px 0 0 #aaa; }

/* files window */
.files-body { flex: 1; min-height: 0; display: flex; }
.files-side { width: 374px; flex: none; display: flex; flex-direction: column; padding: 0 8px 7px 4px; }
.files-list { flex: 1; min-height: 0; background: #fff; border: 1px solid #aaa; }
.filter-row { flex: none; height: 26px; margin-top: 2px; display: flex; gap: 3px; }
.filter-input { flex: 1; padding-left: 3px; display: flex; align-items: center; background: #fafafa; border: 1px solid #a8a8a8; border-radius: 2px; font-size: 12.500px; color: #b8b8b8; white-space: nowrap; }
.filter-btn { width: 24px; display: flex; align-items: center; justify-content: center; background: linear-gradient(#dedede, #bdbdbd); border: 1px solid #a0a0a0; border-radius: 2px; }
.filter-svg { width: 13px; height: 18px; }
.check-row { flex: none; height: 18px; margin-top: 3px; display: flex; align-items: center; font-size: 12px; color: #333; white-space: nowrap; padding-left: 2px; }
.check { width: 16px; height: 16px; flex: none; display: flex; align-items: center; justify-content: center; background: linear-gradient(#fff, #e4e4e4); border: 1px solid #999; border-radius: 3px; font-size: 12px; color: #111; line-height: 1; }
.check-label { margin: 0 3px 0 3px; }
.check-label-2 { margin-left: 5px; }
.files-pane { flex: 1; background: #fff; border-left: 1px solid #aaa; margin-bottom: 1px; }

/* vbox status strip */
.vm-status { height: 42px; flex: none; display: flex; align-items: center; justify-content: flex-end; gap: 7px; padding-right: 4px; background: #f0f0f0; }
.vi { width: 31px; height: 31px; flex: none; display: block; }
.right-alt { font-size: 21px; color: #111; white-space: nowrap; }

/* windows taskbar */
.taskbar { height: 60px; flex: none; display: flex; align-items: stretch; background: #3d3b39; color: #f0f0f0; }
.start { width: 72px; flex: none; display: flex; align-items: center; justify-content: center; }
.start-logo { width: 24px; height: 24px; }
.search { width: 431px; flex: none; position: relative; display: flex; align-items: center; background: #f2f2f2; border: 2px solid #c4c4c4; border-bottom-width: 2px; color: #222; overflow: hidden; }
.search-icon { width: 24px; height: 26px; margin-left: 17px; }
.search-text { margin-left: 18px; font-size: 20.5px; color: #333; position: relative; top: 1px; }
.search-art { position: absolute; right: 0; bottom: 0; width: 115px; height: 58px; }
.apps { display: flex; margin-left: 5px; }
.app { width: 63px; flex: none; display: flex; align-items: center; justify-content: center; position: relative; }
.app-taskview { margin-right: 7px; }
.app-active { background: rgba(255, 255, 255, .2); }
.app-running::after { content: ""; position: absolute; left: 8px; right: 8px; bottom: 0; height: 3px; background: #76dcf8; }
.app-active::after { left: 1px; right: 2px; }
.ai { width: 36px; height: 36px; display: block; }
.ai-vb { width: 36px; height: 36px; }
.ya { width: 36px; height: 36px; border-radius: 50%; background: #fc3f1d; color: #fff; font-weight: 700; font-size: 24px; display: flex; align-items: center; justify-content: center; line-height: 1; }
.tray-host { display: flex; align-items: center; flex: 1; min-width: 0; margin-left: 3px; }
.th { width: 36px; flex: none; display: flex; justify-content: center; }
.th-sound { width: 34px; }
.thi { width: 20px; height: 20px; }
.thi-wide { width: 26px; height: 22px; }
.thi-tall { width: 14px; height: 30px; }
.lang { width: 36px; margin-left: 11px; flex: none; font-size: 16px; text-align: center; white-space: nowrap; }
.clock { width: 126px; flex: none; display: flex; flex-direction: column; align-items: center; gap: 7px; font-size: 17px; line-height: 21px; position: relative; top: -1px; }
.notif { width: 30px; margin-left: 7px; flex: none; display: flex; justify-content: center; }
.notif-icon { width: 32px; height: 38px; flex: none; }
.notif-num { font: 700 15px "Open Sans", sans-serif; fill: #f4f4f4; text-anchor: middle; }
.show-desktop { margin-left: 27px; width: 1px; height: 100%; background: #777; }
```
FILE: script.js
```js
var group = document.getElementById('curve');
var NS = 'http://www.w3.org/2000/svg';
var steps = 720;
function px(t) { return 448.5 + 297.5 * Math.sin(t); }
function py(t) { return 484 - 159 * Math.sin(2 * t); }
for (var i = 0; i < steps; i++) {
  var t0 = i / steps * 2 * Math.PI;
  var t1 = (i + 1) / steps * 2 * Math.PI;
  var d = Math.abs(Math.asin(Math.sin(t0)));
  var w = Math.min(3.8, 1 + 2.8 * Math.pow(d / 0.785, 2));
  var seg = document.createElementNS(NS, 'line');
  seg.setAttribute('x1', px(t0).toFixed(2));
  seg.setAttribute('y1', py(t0).toFixed(2));
  seg.setAttribute('x2', px(t1).toFixed(2));
  seg.setAttribute('y2', py(t1).toFixed(2));
  seg.setAttribute('stroke-width', w.toFixed(2));
  group.appendChild(seg);
}
```
